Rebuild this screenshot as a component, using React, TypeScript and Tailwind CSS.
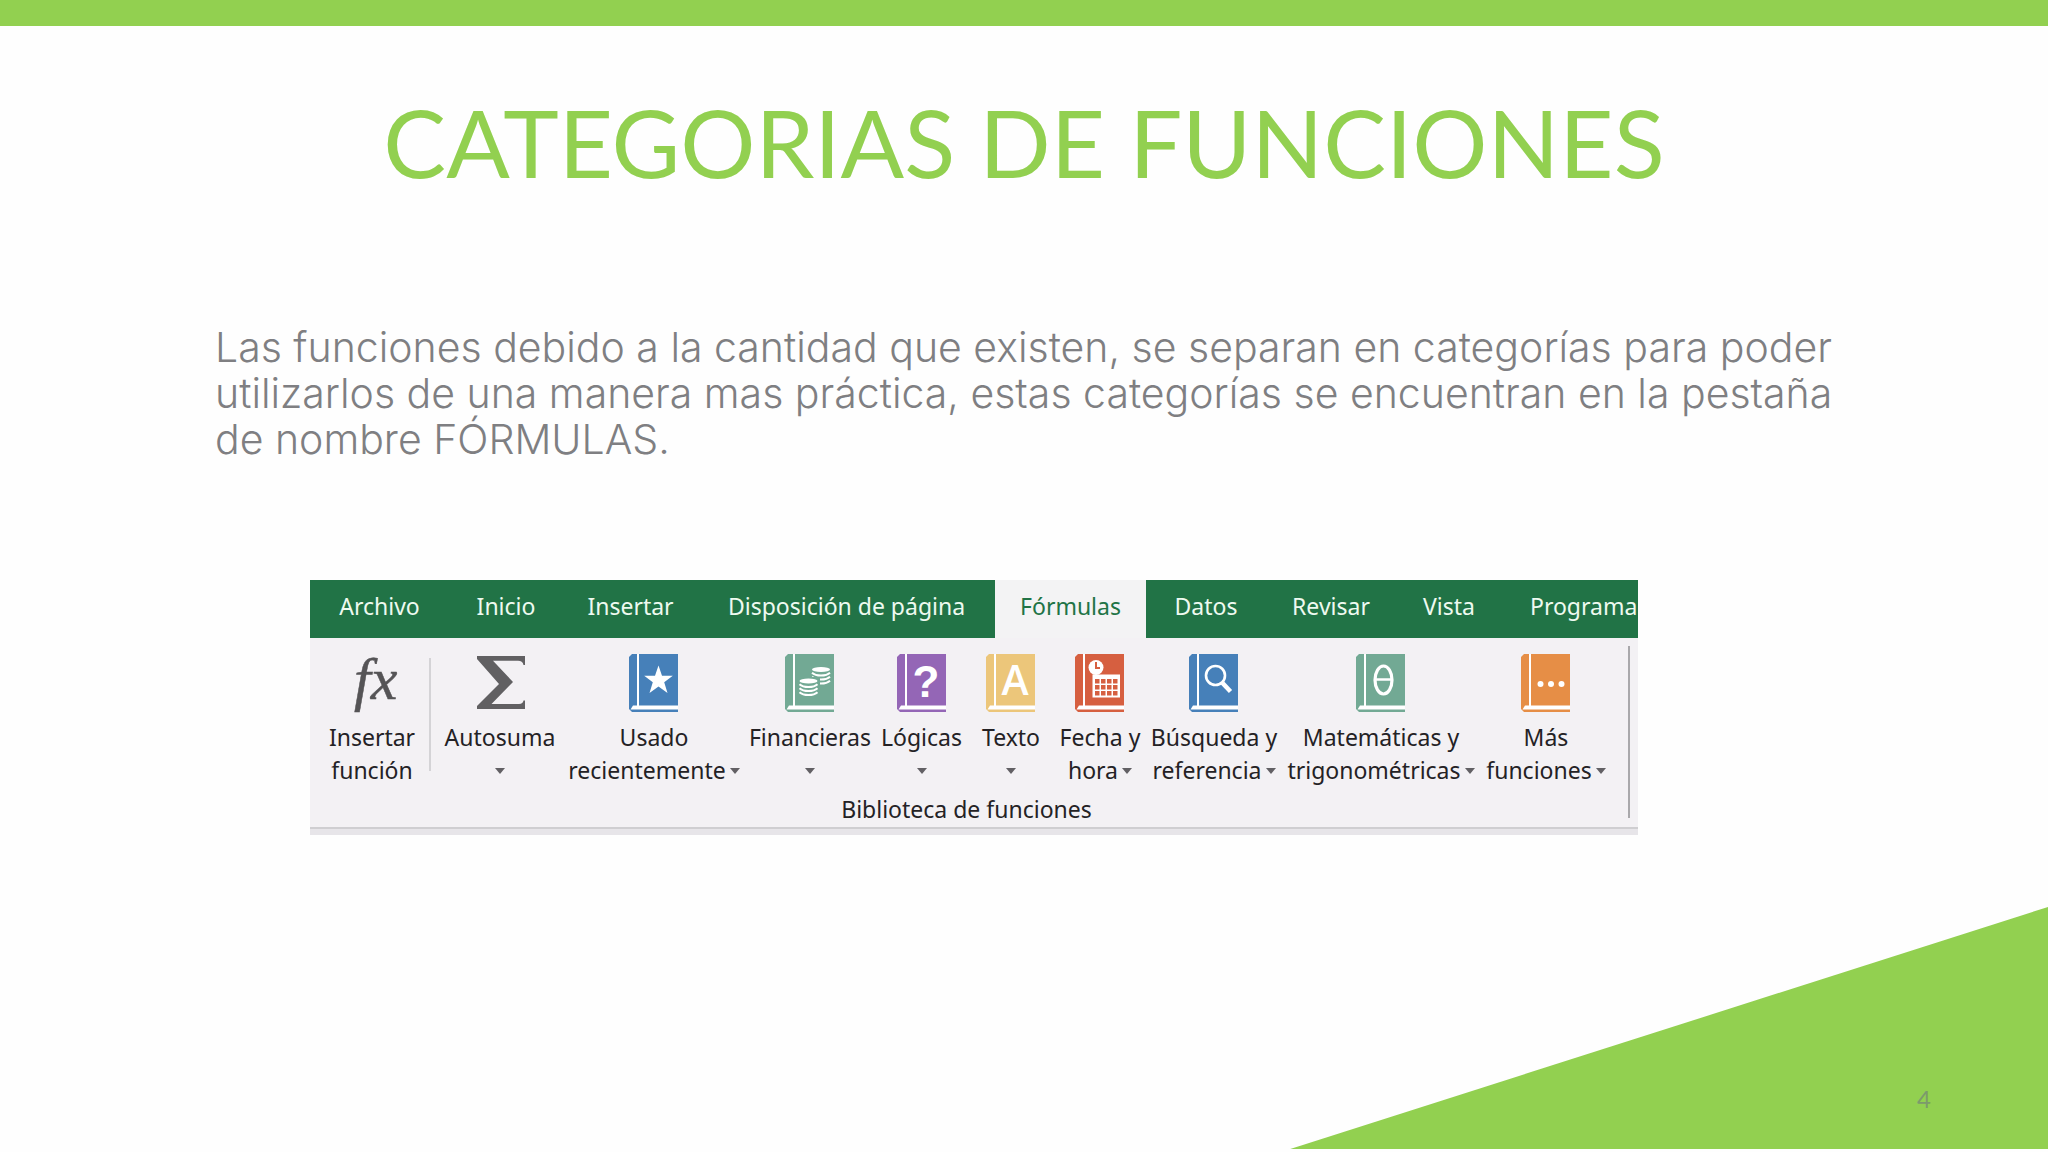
import type { ReactNode } from 'react'

interface Tool {
  name: string
  lines: string[]
  icon: ReactNode
  dropdown: boolean
}

const tabs = ['Archivo', 'Inicio', 'Insertar', 'Disposición de página', 'Fórmulas', 'Datos', 'Revisar', 'Vista', 'Programador']

const activeTab = 'Fórmulas'

function Book({ color, children }: { color: string; children: ReactNode }) {
  return (
    <svg width="50" height="58" viewBox="0 0 50 58" fill="white" className="overflow-visible" aria-hidden="true">
      <path d="M3 0H49V58H3L0 55V3Z" fill={color} />
      <rect x="8" width="2" height="52" />
      <path d="M4 51.500H49V55.500H1.500Z" />
      {children}
    </svg>
  )
}

function Coins({ x, y }: { x: number; y: number }) {
  return (
    <g transform={`translate(${x} ${y})`} fill="none" stroke="white" strokeWidth="2">
      <ellipse rx="9" ry="2.600" fill="white" stroke="none" />
      <path d="M-9 3.200C-6 6-2 6 0 6S6 6 9 3.200" />
      <path d="M-9 7.200C-6 10-2 10 0 10S6 10 9 7.200" />
      <path d="M-9 11.200C-6 14-2 14 0 14S6 14 9 11.200" />
    </g>
  )
}

const calendarColumns = [20, 26, 32, 38]
const calendarRows = [25, 31, 37]

const tools: Tool[] = [
  {
    name: 'autosuma',
    lines: ['Autosuma'],
    dropdown: true,
    icon: (
      <svg width="50" height="58" viewBox="-2 -2 50 58" aria-hidden="true">
        <path d="M0 0H48V9H46.500C46 6 44 4.700 41 4.700H16L36 26 14.500 48H42C45 48 46 46.500 46.500 44.500H48V53H0V50L22 28 0 3Z" fill="#616062" />
      </svg>
    ),
  },
  {
    name: 'recientes',
    lines: ['Usado', 'recientemente'],
    dropdown: true,
    icon: (
      <Book color="#4680b9">
        <path d="M29.500 11.500L33 21.800H43.800L35.200 28.300L38.500 39L29.500 32.500L20.500 39L23.800 28.300L15.200 21.800H26Z" />
      </Book>
    ),
  },
  {
    name: 'financieras',
    lines: ['Financieras'],
    dropdown: true,
    icon: (
      <Book color="#72a994">
        <Coins x={36} y={15.5} />
        <rect x="13" y="23" width="22" height="17" fill="#72a994" />
        <Coins x={23.5} y={27} />
      </Book>
    ),
  },
  {
    name: 'logicas',
    lines: ['Lógicas'],
    dropdown: true,
    icon: (
      <Book color="#9466b6">
        <text x="29" y="43" textAnchor="middle" className="font-['Liberation_Sans'] text-[44px] leading-none font-bold">?</text>
      </Book>
    ),
  },
  {
    name: 'texto',
    lines: ['Texto'],
    dropdown: true,
    icon: (
      <Book color="#ecc67a">
        <text x="29" y="41" textAnchor="middle" className="font-['Open_Sans'] text-[41px] leading-none font-semibold">A</text>
      </Book>
    ),
  },
  {
    name: 'fecha',
    lines: ['Fecha y', 'hora'],
    dropdown: true,
    icon: (
      <Book color="#d65f40">
        <circle cx="21" cy="13.500" r="7.500" />
        <path d="M21 8V14H25" fill="none" stroke="#d65f40" strokeWidth="2" />
        <rect x="17.500" y="20.500" width="27.500" height="23" />
        {calendarRows.map((y) =>
          calendarColumns.map((x) => <rect key={`${x}-${y}`} x={x} y={y} width="4.500" height="4.500" fill="#d65f40" />),
        )}
      </Book>
    ),
  },
  {
    name: 'busqueda',
    lines: ['Búsqueda y', 'referencia'],
    dropdown: true,
    icon: (
      <Book color="#4680b9">
        <circle cx="26.500" cy="21.500" r="9.500" fill="none" stroke="white" strokeWidth="2.600" />
        <path d="M33.500 29L41.500 37.500" stroke="white" strokeWidth="4.500" />
      </Book>
    ),
  },
  {
    name: 'matematicas',
    lines: ['Matemáticas y', 'trigonométricas'],
    dropdown: true,
    icon: (
      <Book color="#72a994">
        <ellipse cx="27.500" cy="26" rx="8.500" ry="14" fill="none" stroke="white" strokeWidth="3.200" />
        <path d="M19 25.500H36" stroke="white" strokeWidth="2.500" />
      </Book>
    ),
  },
  {
    name: 'mas',
    lines: ['Más', 'funciones'],
    dropdown: true,
    icon: (
      <Book color="#e68e46">
        <circle cx="19.500" cy="30" r="3" />
        <circle cx="30" cy="30" r="3" />
        <circle cx="40.500" cy="30" r="3" />
      </Book>
    ),
  },
]

const insertFunction: Tool = {
  name: 'insertar',
  lines: ['Insertar', 'función'],
  dropdown: false,
  icon: (
    <svg width="50" height="58" viewBox="0 0 50 58" fill="#555456" stroke="#555456" strokeWidth="0.500" className="overflow-visible" aria-hidden="true">
      <text x="7" y="45" className="font-['Liberation_Serif'] text-[60px] leading-none italic">fx</text>
    </svg>
  ),
}

function Arrow() {
  return (
    <svg width="10" height="6" viewBox="0 0 10 6" className="shrink-0" aria-hidden="true">
      <path d="M0 0H10L5 6Z" fill="#626064" />
    </svg>
  )
}

function ToolButton({ tool }: { tool: Tool }) {
  return (
    <button type="button" className="flex min-w-0 flex-col items-center whitespace-nowrap">
      {tool.icon}
      <span className="mt-[9px] leading-[33px]">{tool.lines[0]}</span>
      <span className="flex h-[33px] items-center gap-1 leading-[33px]">
        {tool.lines[1]}
        {tool.dropdown && <Arrow />}
      </span>
    </button>
  )
}

function Ribbon() {
  return (
    <section className="mt-[118px] mr-[410px] ml-[310px] overflow-hidden font-['Noto_Sans',sans-serif] text-[23px] text-[#242225]">
      {/* Tabs */}
      <nav className="grid h-[58px] grid-cols-[139fr_114fr_135fr_297fr_151fr_120fr_130fr_106fr_136fr] bg-[#217346] leading-[30px] text-[#eefaf0]">
        {tabs.map((tab) => (
          <button
            key={tab}
            type="button"
            className={`flex min-w-0 items-center whitespace-nowrap pb-[6px] ${
              tab === 'Programador' ? 'justify-start pl-7' : 'justify-center'
            } ${tab === activeTab ? 'bg-[#f3f3f4] text-[#217346]' : ''}`}
          >
            {tab}
          </button>
        ))}
      </nav>

      {/* Function library */}
      <div className="flex border-b-2 border-[#cfced1] bg-[#f3f1f4]">
        <div className="flex-1 pt-4 pr-[17px] pb-px pl-3">
          <div className="grid grid-cols-[100fr_16fr_124fr_184fr_128fr_95fr_84fr_94fr_134fr_200fr_130fr]">
            <ToolButton tool={insertFunction} />
            <div className="mt-1 mb-4 ml-[7px] w-[2px] bg-[#d4d3d6]" />
            {tools.map((tool) => (
              <ToolButton key={tool.name} tool={tool} />
            ))}
          </div>
          <p className="mt-[6px] text-center leading-[33px]">Biblioteca de funciones</p>
        </div>
        <div className="mt-2 mr-2 mb-[9px] w-[2px] bg-[#a9a8ab]" />
      </div>
      <div className="h-[6px] bg-[#e7e5e9]" />
    </section>
  )
}

export default function App() {
  return (
    <main className="flex min-h-screen flex-col bg-[#fefefe] font-['Lato',sans-serif]">
      <div className="h-[26px] bg-[#92d050]" />

      <h1 className="mt-[69px] text-center text-[94px] leading-[94px] text-[#92d050]">CATEGORIAS DE FUNCIONES</h1>

      <p className="mt-[135px] ml-[215px] font-['Inter',sans-serif] text-[41px] leading-[46px] font-light text-[#7f7f82]">
        Las funciones debido a la cantidad que existen, se separan en categorías para poder
        <br />
        utilizarlos de una manera mas práctica, estas categorías se encuentran en la pestaña
        <br />
        de nombre FÓRMULAS.
      </p>

      <Ribbon />

      {/* Corner wedge with the slide number */}
      <footer className="mt-auto mb-[3px] ml-auto flex h-[242px] w-[37%] items-end justify-end bg-[#92d050] pr-[117px] pb-[38px] [clip-path:polygon(100%_0,100%_100%,0_100%)]">
        <span className="text-[24px] leading-6 text-[#7c9a6c]">4</span>
      </footer>
    </main>
  )
}
